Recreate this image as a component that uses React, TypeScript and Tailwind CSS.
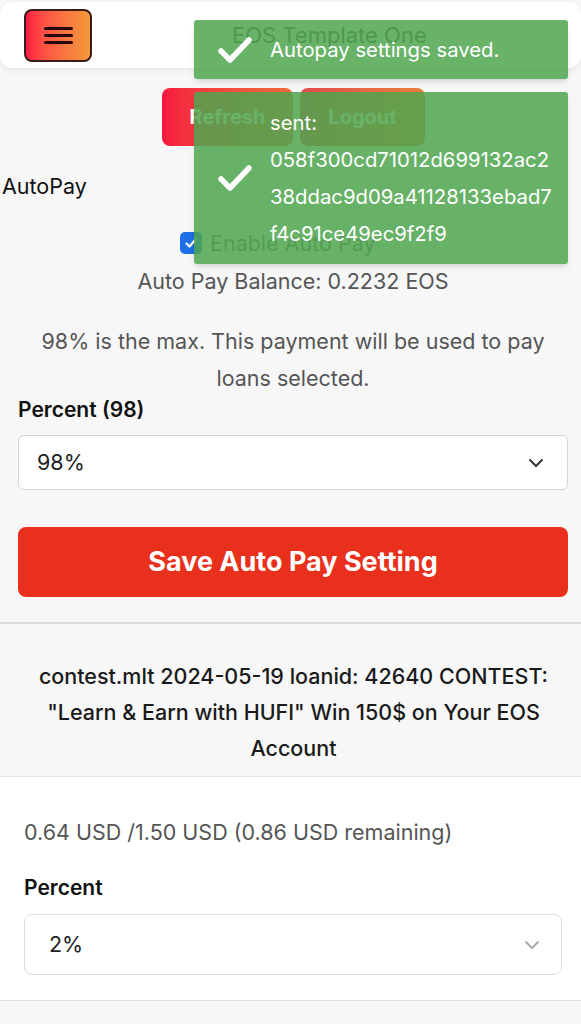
import React from "react";

function Check() {
  return (
    <svg width="36" height="28" viewBox="0 0 36 28" fill="none" className="shrink-0">
      <path d="M4 15 L13 24 L32 4" stroke="#ffffff" strokeWidth="5.5" strokeLinecap="round" strokeLinejoin="round" />
    </svg>
  );
}

function Chevron({ color }: { color: string }) {
  return (
    <svg width="18" height="12" viewBox="0 0 18 12" fill="none">
      <path d="M3 3 L9 9 L15 3" stroke={color} strokeWidth="2" strokeLinecap="round" strokeLinejoin="round" />
    </svg>
  );
}

export default function App() {
  return (
    <div
      className="relative min-h-[1024px] w-full bg-[#f7f7f7] pt-[2px]"
      style={{ fontFamily: "Inter, 'Noto Sans', 'Liberation Sans', sans-serif" }}
    >
      {/* Header */}
      <div className="flex h-[66px] items-center rounded-xl bg-white shadow-[0_2px_6px_rgba(0,0,0,0.08)]">
        <button className="ml-[24px] flex h-[53px] w-[68px] flex-col items-center justify-center gap-[4px] rounded-lg border-2 border-[#3a1c1c] bg-gradient-to-r from-[#ff1744] to-[#f2993a]">
          <span className="block h-[3px] w-[29px] rounded bg-[#2a0808]" />
          <span className="block h-[3px] w-[29px] rounded bg-[#2a0808]" />
          <span className="block h-[3px] w-[29px] rounded bg-[#2a0808]" />
        </button>
        <div className="ml-[140px] text-[22px] text-[#444]">EOS Template One</div>
      </div>

      {/* Top buttons */}
      <div className="mt-[20px] flex justify-center gap-[7px] pl-[6px]">
        <button className="h-[58px] w-[131px] rounded-lg bg-gradient-to-r from-[#f5183f] to-[#ec6a3c] text-[20px] font-bold text-white">
          Refresh
        </button>
        <button className="h-[58px] w-[125px] rounded-lg bg-gradient-to-r from-[#e24a4a] to-[#e9803c] text-[20px] font-bold text-white">
          Logout
        </button>
      </div>

      {/* AutoPay section */}
      <div className="pl-[18px] pr-[13px]">
        <div className="-ml-[16px] mt-[26px] h-[28px] text-[21.5px] leading-[28px] text-[#111]">AutoPay</div>

        <div className="ml-[162px] mt-[29px] flex h-[28px] items-center gap-[8px]">
          <span className="flex h-[22px] w-[22px] items-center justify-center rounded-[5px] bg-[#1f6fe8]">
            <svg width="14" height="12" viewBox="0 0 14 12" fill="none">
              <path d="M2.5 6.5 L5.5 9.5 L11.5 2.5" stroke="#fff" strokeWidth="2.2" strokeLinecap="round" strokeLinejoin="round" />
            </svg>
          </span>
          <span className="text-[21.5px] leading-[28px] text-[#666]">Enable Auto Pay</span>
        </div>

        <div className="mt-[10px] text-center text-[21.5px] leading-[28px] text-[#555]">
          Auto Pay Balance: 0.2232 EOS
        </div>

        <p className="mx-auto mt-[28px] w-[540px] text-center text-[21.5px] leading-[37px] text-[#555]">
          98% is the max. This payment will be used to pay loans selected.
        </p>

        <div className="h-[26px] text-[21px] font-semibold leading-[26px] text-[#111]">Percent (98)</div>

        <div className="mt-[12px] flex h-[55px] items-center justify-between rounded-md border border-[#d6d6d6] bg-white pl-[18px] pr-[22px]">
          <span className="text-[21.5px] text-[#222]">98%</span>
          <Chevron color="#333" />
        </div>

        <button className="mt-[37px] flex h-[70px] w-full items-center justify-center rounded-lg bg-[#e8301d] text-[27px] font-bold text-white">
          Save Auto Pay Setting
        </button>
      </div>

      <div className="mt-[25px] border-t-2 border-[#d9d9d9]" />

      {/* Contest section */}
      <div className="border-b border-[#e2e2e2] bg-[#f7f7f7] pb-[10px] pl-[8px] pr-[2px] pt-[34px]">
        <p className="mx-auto w-[560px] text-center text-[21.5px] font-medium leading-[36px] text-[#1a1a1a]">
          contest.mlt 2024-05-19 loanid: 42640 CONTEST: "Learn &amp; Earn with HUFI" Win 150$ on Your EOS Account
        </p>
      </div>

      <div className="border-b border-[#e2e2e2] bg-white pb-[25px] pl-[24px] pr-[19px] pt-[41px]">
        <div className="h-[28px] text-[21.5px] leading-[28px] text-[#555]">
          0.64 USD /1.50 USD (0.86 USD remaining)
        </div>
        <div className="mt-[29px] h-[26px] text-[21px] font-semibold leading-[26px] text-[#111]">Percent</div>
        <div className="mt-[13px] flex h-[61px] items-center justify-between rounded-lg border border-[#dcdcdc] bg-white pl-[24px] pr-[20px]">
          <span className="text-[21.5px] text-[#222]">2%</span>
          <Chevron color="#aaa" />
        </div>
      </div>

      {/* Toasts */}
      <div className="absolute right-[13px] top-[20px] flex w-[374px] flex-col gap-[13px]">
        <div className="flex h-[59px] items-center rounded-[3px] bg-[#4fa64f]/85 pl-[23px] pr-[12px] shadow-md">
          <Check />
          <span className="ml-[17px] text-[20.3px] leading-[37px] text-white">Autopay settings saved.</span>
        </div>
        <div className="flex items-center rounded-[3px] bg-[#4fa64f]/85 py-[12px] pl-[23px] pr-[12px] shadow-md">
          <Check />
          <div className="ml-[17px] text-[20.3px] leading-[37px] text-white">
            <div>sent:</div>
            <div>058f300cd71012d699132ac2</div>
            <div>38ddac9d09a41128133ebad7</div>
            <div>f4c91ce49ec9f2f9</div>
          </div>
        </div>
      </div>
    </div>
  );
}
